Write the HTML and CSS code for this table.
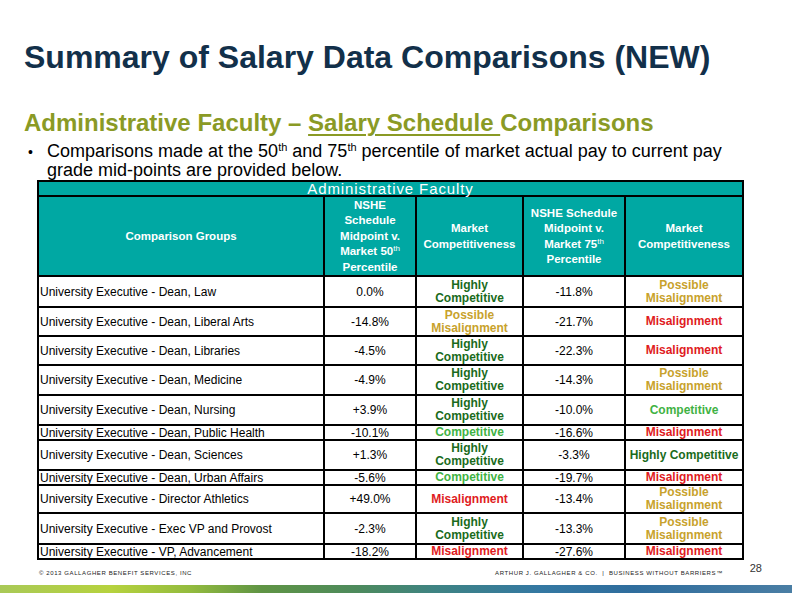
FILE: index.html
```html
<!DOCTYPE html>
<html lang="en">
<head>
<meta charset="utf-8">
<title>Summary of Salary Data Comparisons (NEW)</title>
<link rel="stylesheet" href="styles.css">
</head>
<body>
<div class="slide">
  <h1 class="title">Summary of Salary Data Comparisons (NEW)</h1>
  <h2 class="subtitle">Administrative Faculty – <span class="ul">Salary Schedule </span>Comparisons</h2>
  <div class="bullet">
    <span class="dot">•</span>
    <p class="bullet-text">Comparisons made at the 50<sup>th</sup> and 75<sup>th</sup> percentile of market actual pay to current pay grade mid-points are provided below.</p>
  </div>

  <table class="data">
    <colgroup>
      <col class="c1"><col class="c2"><col class="c3"><col class="c4"><col class="c5">
    </colgroup>
    <tr class="h15 top-row">
      <th colspan="5" class="caption-cell">Administrative Faculty</th>
    </tr>
    <tr class="h80 head-row">
      <th>Comparison Groups</th>
      <th>NSHE<br>Schedule<br>Midpoint v.<br>Market 50<sup>th</sup><br>Percentile</th>
      <th>Market<br>Competitiveness</th>
      <th>NSHE Schedule<br>Midpoint v.<br>Market 75<sup>th</sup><br>Percentile</th>
      <th>Market<br>Competitiveness</th>
    </tr>
    <tr class="h31">
      <td class="label">University Executive - Dean, Law</td>
      <td class="num">0.0%</td>
      <td class="st hc">Highly Competitive</td>
      <td class="num">-11.8%</td>
      <td class="st pm">Possible Misalignment</td>
    </tr>
    <tr class="h29">
      <td class="label">University Executive - Dean, Liberal Arts</td>
      <td class="num">-14.8%</td>
      <td class="st pm">Possible Misalignment</td>
      <td class="num">-21.7%</td>
      <td class="st m">Misalignment</td>
    </tr>
    <tr class="h29">
      <td class="label">University Executive - Dean, Libraries</td>
      <td class="num">-4.5%</td>
      <td class="st hc">Highly Competitive</td>
      <td class="num">-22.3%</td>
      <td class="st m">Misalignment</td>
    </tr>
    <tr class="h30">
      <td class="label">University Executive - Dean, Medicine</td>
      <td class="num">-4.9%</td>
      <td class="st hc">Highly Competitive</td>
      <td class="num">-14.3%</td>
      <td class="st pm">Possible Misalignment</td>
    </tr>
    <tr class="h30">
      <td class="label">University Executive - Dean, Nursing</td>
      <td class="num">+3.9%</td>
      <td class="st hc">Highly Competitive</td>
      <td class="num">-10.0%</td>
      <td class="st c">Competitive</td>
    </tr>
    <tr class="h15">
      <td class="label">University Executive - Dean, Public Health</td>
      <td class="num">-10.1%</td>
      <td class="st c">Competitive</td>
      <td class="num">-16.6%</td>
      <td class="st m">Misalignment</td>
    </tr>
    <tr class="h30">
      <td class="label">University Executive - Dean, Sciences</td>
      <td class="num">+1.3%</td>
      <td class="st hc">Highly Competitive</td>
      <td class="num">-3.3%</td>
      <td class="st hc">Highly Competitive</td>
    </tr>
    <tr class="h15">
      <td class="label">University Executive - Dean, Urban Affairs</td>
      <td class="num">-5.6%</td>
      <td class="st c">Competitive</td>
      <td class="num">-19.7%</td>
      <td class="st m">Misalignment</td>
    </tr>
    <tr class="h28">
      <td class="label">University Executive - Director Athletics</td>
      <td class="num">+49.0%</td>
      <td class="st m">Misalignment</td>
      <td class="num">-13.4%</td>
      <td class="st pm">Possible Misalignment</td>
    </tr>
    <tr class="h31">
      <td class="label">University Executive - Exec VP and Provost</td>
      <td class="num">-2.3%</td>
      <td class="st hc">Highly Competitive</td>
      <td class="num">-13.3%</td>
      <td class="st pm">Possible Misalignment</td>
    </tr>
    <tr class="h14">
      <td class="label">University Executive - VP, Advancement</td>
      <td class="num">-18.2%</td>
      <td class="st m">Misalignment</td>
      <td class="num">-27.6%</td>
      <td class="st m">Misalignment</td>
    </tr>
  </table>

  <footer class="footer">
    <span class="copy">© 2013 GALLAGHER BENEFIT SERVICES, INC</span>
    <span class="brand">ARTHUR J. GALLAGHER &amp; CO. &nbsp;|&nbsp; BUSINESS WITHOUT BARRIERS™</span>
    <span class="page">28</span>
  </footer>
  <div class="band"></div>
</div>
</body>
</html>
```
FILE: styles.css
```css
* { box-sizing: border-box; }
html, body { margin: 0; padding: 0; background: #fff; }
body { font-family: "Liberation Sans", Arial, sans-serif; color: #000; }

.slide {
  width: 792px;
  height: 612px;
  overflow: hidden;
  display: flex;
  flex-direction: column;
}

.title {
  margin: 39px 0 0 24px;
  font-size: 32px;
  line-height: 36px;
  font-weight: bold;
  color: #12304a;
}

.subtitle {
  margin: 34px 0 0 24px;
  font-size: 24px;
  line-height: 28px;
  font-weight: bold;
  color: #8a9a25;
}
.subtitle .ul { text-decoration: underline; text-decoration-thickness: 2px; text-underline-offset: 3px; }

.bullet {
  display: flex;
  flex: none;
  margin: 5px 0 0 28px;
  width: 715px;
  height: 38px;
}
.dot {
  width: 19px;
  font-size: 14px;
  line-height: 19px;
  padding-top: 1px;
}
.bullet-text {
  margin: 0;
  font-size: 18px;
  line-height: 19px;
  flex: 1;
}
.bullet-text sup { font-size: 11px; line-height: 0; vertical-align: 6px; }

.data {
  flex: none;
  margin: 0 0 0 37px;
  width: 707px;
  table-layout: fixed;
  border-collapse: separate;
  border-spacing: 0;
  border-top: 2px solid #000;
  border-left: 2px solid #000;
}
.c1 { width: 286px; }
.c2 { width: 92px; }
.c3 { width: 107px; }
.c4 { width: 102px; }
.c5 { width: 118px; }

.data th, .data td {
  padding: 0;
  border-right: 2px solid #000;
  border-bottom: 2px solid #000;
  vertical-align: middle;
  text-align: center;
  overflow: visible;
}

.h14 { height: 14px; }
.h15 { height: 15px; }
.h28 { height: 28px; }
.h29 { height: 29px; }
.h30 { height: 30px; }
.h31 { height: 31px; }
.h80 { height: 80px; }

.caption-cell {
  background: #00a8a3;
  color: #fff;
  font-weight: normal;
  font-size: 15px;
  letter-spacing: 0.9px;
  line-height: 13px;
}

.head-row th {
  background: #00a8a3;
  color: #fff;
  font-size: 11.5px;
  font-weight: bold;
  line-height: 15.4px;
  padding-top: 1px;
}
.head-row sup { font-size: 8px; line-height: 0; vertical-align: 4px; font-weight: normal; }

.data td {
  font-size: 12px;
  line-height: 12px;
}
.data td.label { text-align: left; padding-left: 1px; white-space: nowrap; }
.data td.st { font-weight: bold; line-height: 13px; }
.hc { color: #1a6b1c; }
.c  { color: #3fb244; }
.pm { color: #c8a22c; }
.m  { color: #e01b22; }

.footer {
  display: flex;
  flex: none;
  align-items: flex-start;
  margin-top: 6px;
  height: 18px;
  padding-left: 39px;
  font-size: 6px;
  color: #222;
}
.copy { margin-top: 4px; letter-spacing: 0.6px; }
.brand { margin-left: auto; margin-top: 4px; letter-spacing: 0.6px; }
.page { margin-left: 27px; margin-right: 30px; margin-top: -3px; font-size: 11px; line-height: 11px; color: #333; }

.band {
  flex: none;
  margin-top: 1px;
  height: 8px;
  background: linear-gradient(90deg, #a9c957 0%, #b6d23e 14%, #93bb3e 24%, #5f9444 33%, #4d8a5c 45%, #3e8383 55%, #3478a2 68%, #2f6d9d 80%, #4a7ea4 100%);
}
```
